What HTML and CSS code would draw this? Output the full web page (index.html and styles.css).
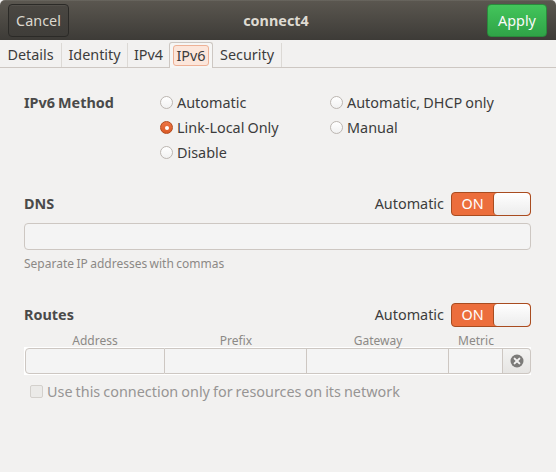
FILE: index.html
```html
<!DOCTYPE html>
<html>
<head>
<meta charset="utf-8">
<link rel="stylesheet" href="styles.css">
</head>
<body>
<header class="header">
  <div class="btn cancel">Cancel</div>
  <div class="title">connect4</div>
  <div class="btn apply">Apply</div>
</header>
<nav class="tabs">
  <div class="tab tab-details">Details</div>
  <div class="tab tab-identity">Identity</div>
  <div class="tab tab-ipv4 pre">IPv4</div>
  <div class="tab tab-ipv6 active"><span class="focus">IPv6</span></div>
  <div class="tab tab-security">Security</div>
</nav>
<main class="content">
  <section class="method">
    <div class="method-label">IPv6 Method</div>
    <label class="radio"><span class="dot"></span>Automatic</label>
    <label class="radio"><span class="dot"></span>Automatic, DHCP only</label>
    <label class="radio"><span class="dot checked"></span>Link-Local Only</label>
    <label class="radio"><span class="dot"></span>Manual</label>
    <label class="radio"><span class="dot"></span>Disable</label>
  </section>

  <div class="sec-head dns-head">
    <div class="sec-title">DNS</div>
    <div class="auto">Automatic</div>
    <div class="switch"><span class="on">ON</span><span class="knob"></span></div>
  </div>
  <div class="entry"></div>
  <div class="hint">Separate IP addresses with commas</div>

  <div class="sec-head routes-head">
    <div class="sec-title">Routes</div>
    <div class="auto">Automatic</div>
    <div class="switch"><span class="on">ON</span><span class="knob"></span></div>
  </div>
  <div class="cols">
    <div>Address</div>
    <div>Prefix</div>
    <div>Gateway</div>
    <div>Metric</div>
  </div>
  <div class="route">
    <div class="cell first"></div>
    <div class="cell"></div>
    <div class="cell"></div>
    <div class="cell"></div>
    <div class="del">
      <svg width="14" height="14" viewBox="0 0 14 14"><circle cx="7" cy="7" r="6.5" fill="#7c7b79"/><path d="M4.6 4.6 L9.4 9.4 M9.4 4.6 L4.6 9.4" stroke="#f2f1f0" stroke-width="2" stroke-linecap="round"/></svg>
    </div>
  </div>
  <label class="check"><span class="box"></span>Use this connection only for resources on its network</label>
</main>
</body>
</html>
```
FILE: styles.css
```css
html, body {
  margin: 0;
  padding: 0;
}
body {
  width: 556px;
  height: 472px;
  overflow: hidden;
  background: #f2f1f0;
  font-family: "Noto Sans", "DejaVu Sans", sans-serif;
  font-size: 14.4px;
  word-spacing: -0.7px;
  color: #3c3c3c;
}

.header {
  height: 40px;
  box-sizing: border-box;
  display: flex;
  align-items: center;
  justify-content: space-between;
  padding: 0 9px 0 8px;
  background: linear-gradient(#5b5750, #3d3b37);
  border-radius: 5px 5px 0 0;
  box-shadow: inset 0 1px rgba(255,255,255,0.08);
}
.btn {
  height: 33px;
  box-sizing: border-box;
  border-radius: 4px;
  display: flex;
  align-items: center;
  justify-content: center;
}
.cancel {
  width: 61px;
  border: 1px solid #2b2a27;
  background: linear-gradient(#4a4742, #3f3d39);
  color: #dcd8cf;
  box-shadow: inset 0 1px rgba(255,255,255,0.05);
}
.apply {
  width: 60px;
  border: 1px solid #2a8a3c;
  background: linear-gradient(#43c55b, #2fa447);
  color: #fafafa;
}
.title {
  font-weight: bold;
  color: #dfdbd2;
  margin-right: 4px;
}

.tabs {
  display: flex;
  height: 28px;
  box-sizing: border-box;
  border-bottom: 1px solid #cdc7c2;
}
.tab {
  display: flex;
  align-items: center;
  justify-content: center;
  box-sizing: border-box;
  padding-bottom: 1px;
  border-right: 1px solid #dcd9d5;
  margin-top: 3px;
  color: #3c3c3c;
}
.tab-details { width: 62px; }
.tab-identity { width: 66px; }
.tab-ipv4 { width: 41px; }
.tab-ipv6 { width: 44px; }
.tab-security { width: 69px; }
.tab.pre {
  border-right: none;
}
.tab.active {
  margin-top: 2px;
  margin-bottom: -1px;
  padding: 0;
  background: #f6f6f5;
  border: 1px solid #cdc7c2;
  border-bottom: none;
  border-radius: 3px 3px 0 0;
}
.focus {
  display: block;
  padding: 0 2px;
  line-height: 19px;
  background: #fce6db;
  border: 1px solid #eeb196;
  border-radius: 3px;
}

.content {
  padding: 22px 25px 0 24px;
}
.method {
  display: grid;
  grid-template-columns: 136px 170px 1fr;
  grid-auto-rows: 25px;
  align-items: center;
}
.method-label {
  grid-row: 1 / span 3;
  align-self: start;
  line-height: 25px;
  font-weight: bold;
  color: #4a4a4a;
}
.radio {
  display: flex;
  align-items: center;
  gap: 4px;
}
.dot {
  width: 11px;
  height: 11px;
  border: 1px solid #bcb6b1;
  border-radius: 50%;
  background: linear-gradient(#ffffff, #f1f1f1);
  flex: none;
  display: flex;
  align-items: center;
  justify-content: center;
}
.dot.checked {
  background: linear-gradient(#ec7545, #db5a26);
  border-color: #b34a1c;
}
.dot.checked::after {
  content: "";
  width: 4px;
  height: 4px;
  border-radius: 50%;
  background: #ffffff;
}

.sec-head {
  display: flex;
  align-items: center;
  height: 25px;
}
.dns-head {
  margin-top: 26px;
}
.routes-head {
  margin-top: 31px;
}
.sec-title {
  flex: 1;
  font-weight: bold;
  color: #4a4a4a;
}
.auto {
  margin-right: 7px;
}
.switch {
  width: 80px;
  height: 24px;
  box-sizing: border-box;
  border: 1px solid #a84c20;
  border-radius: 4px;
  background: #ec6e3c;
  display: flex;
  overflow: hidden;
}
.on {
  width: 41px;
  display: flex;
  align-items: center;
  justify-content: center;
  color: #ffffff;
}
.knob {
  flex: 1;
  background: linear-gradient(#ffffff, #ececec);
  border: 1px solid #a84c20;
  border-width: 0 0 0 1px;
  border-radius: 4px;
}

.entry {
  height: 27px;
  box-sizing: border-box;
  margin-top: 7px;
  border: 1px solid #cdc7c2;
  border-radius: 4px;
  background: #f4f4f4;
}
.hint {
  margin-top: 7px;
  font-size: 12px;
  line-height: 14px;
  color: #8c8986;
}

.cols {
  display: grid;
  grid-template-columns: 140px 142px 142px 54px 28px;
  padding-left: 1px;
  margin-top: 8px;
  font-size: 12px;
  line-height: 12px;
  color: #8c8986;
  text-align: center;
}
.route {
  display: grid;
  grid-template-columns: 140px 142px 142px 54px 28px;
  padding: 1px;
  background: #ffffff;
  height: 28px;
  box-sizing: border-box;
}
.cell {
  height: 26px;
  box-sizing: border-box;
  border: 1px solid #cdc7c2;
  border-left: none;
  background: #f4f4f4;
}
.cell.first {
  border-left: 1px solid #cdc7c2;
  border-radius: 4px 0 0 4px;
}
.del {
  height: 26px;
  box-sizing: border-box;
  border: 1px solid #cdc7c2;
  border-left: none;
  border-radius: 0 4px 4px 0;
  background: linear-gradient(#f3f3f2, #e6e5e3);
  display: flex;
  align-items: center;
  justify-content: center;
}
.del svg {
  display: block;
}

.check {
  display: flex;
  align-items: center;
  gap: 4px;
  height: 16px;
  margin-top: 8px;
  padding-left: 6px;
  color: #979594;
}
.box {
  width: 13px;
  height: 13px;
  box-sizing: border-box;
  border: 1px solid #d3d0cc;
  border-radius: 2px;
  background: #ebeae8;
}
```
